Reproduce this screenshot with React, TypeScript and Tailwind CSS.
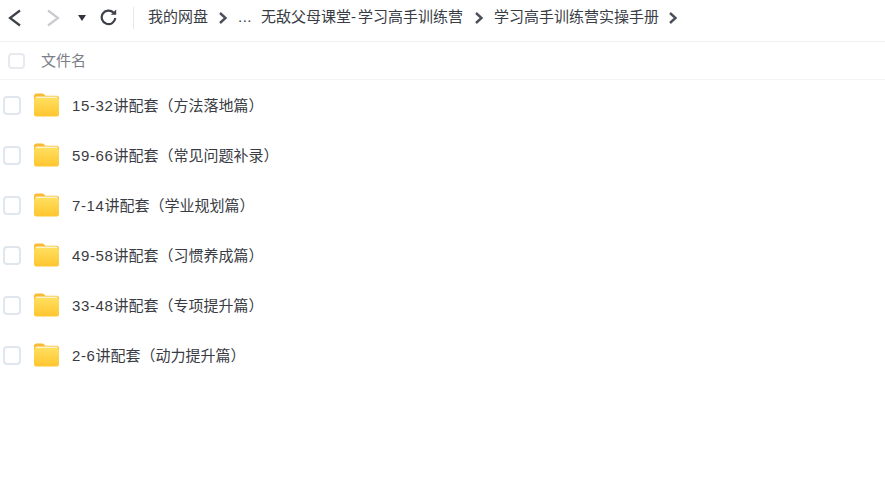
const rows = [
  ["15-32", "讲配套（方法落地篇）"],
  ["59-66", "讲配套（常见问题补录）"],
  ["7-14", "讲配套（学业规划篇）"],
  ["49-58", "讲配套（习惯养成篇）"],
  ["33-48", "讲配套（专项提升篇）"],
  ["2-6", "讲配套（动力提升篇）"],
];

function Sep() {
  return (
    <svg width="10" height="12" viewBox="0 0 10 12" fill="none" stroke="#4b4f5c" strokeWidth="2.4">
      <path d="M2 1l5.5 5L2 11" />
    </svg>
  );
}

function Folder() {
  return (
    <svg width="26" height="24" viewBox="0 0 26 24">
      <defs>
        <linearGradient id="folderBody" x1="0" y1="0" x2="0" y2="1">
          <stop offset="0" stopColor="#ffdf5f" />
          <stop offset="1" stopColor="#ffc52e" />
        </linearGradient>
      </defs>
      <path d="M1 3a2.5 2.5 0 0 1 2.5-2.5h5.5c1 0 1.6.4 2.2 1l1.3 1.2h11A2.5 2.5 0 0 1 26 5.2V10H1z" fill="#f9bb33" />
      <rect x="2.5" y="3.5" width="22" height="5" rx="1" fill="#fff3c9" />
      <rect x="1" y="5" width="25" height="18.5" rx="2.5" fill="url(#folderBody)" />
    </svg>
  );
}

export default function App() {
  return (
    <div className="w-[885px] h-[504px] bg-white overflow-hidden font-['Liberation_Sans','Noto_Sans_CJK_SC',sans-serif]">
      {/* top bar */}
      <div className="h-[42px] pb-[6px] flex items-center border-b border-[#f0f0f2] text-[15px] text-[#3a3c44]">
        <svg className="ml-[7px]" width="15" height="18" viewBox="0 0 15 18" fill="none" stroke="#3d4049" strokeWidth="2.2">
          <path d="M13 1.5L3 9l10 7.5" />
        </svg>
        <svg className="ml-[24px]" width="15" height="18" viewBox="0 0 15 18" fill="none" stroke="#c9cbd0" strokeWidth="2.2">
          <path d="M2 1.5L12 9 2 16.5" />
        </svg>
        <div className="ml-[17px] w-0 h-0 border-x-[4px] border-x-transparent border-t-[6px] border-t-[#33353d]" />
        <svg className="ml-[14px]" width="17" height="17" viewBox="0 0 17 17" fill="none" stroke="#3d4049" strokeWidth="2.2">
          <path d="M13.4 3.6A6.8 6.8 0 1 0 15.3 9" />
          <path d="M10.8 5.8h5.4V0.6z" fill="#3d4049" stroke="none" />
        </svg>
        <div className="ml-[16px] w-px h-[22px] bg-[#e8e8ea]" />
        <span className="ml-[14px]">我的网盘</span>
        <div className="ml-[10px]"><Sep /></div>
        <span className="ml-[10px] tracking-[0.5px]">...</span>
        <span className="ml-[9px]">
          无敌父母课堂<span className="tracking-[2px]">-</span>学习高手训练营
        </span>
        <div className="ml-[11px]"><Sep /></div>
        <span className="ml-[10px]">学习高手训练营实操手册</span>
        <div className="ml-[9px]"><Sep /></div>
      </div>

      {/* header */}
      <div className="h-[38px] flex items-center border-b border-[#f4f4f6]">
        <div className="ml-[8px] w-[17px] h-[16px] rounded-[4px] border-2 border-[#e8e9ee]" />
        <span className="ml-[16px] pt-[2px] text-[15px] text-[#7b7e88]">文件名</span>
      </div>

      {/* rows */}
      <div>
        {rows.map(([num, name]) => (
          <div key={num} className="h-[50px] flex items-center">
            <div className="ml-[3px] w-[18px] h-[19px] rounded-[4px] border-2 border-[#e0e6ee]" />
            <div className="ml-[12px]"><Folder /></div>
            <span className="ml-[13px] pt-[2px] text-[15px] text-[#3a3c44]">
              <span className="tracking-[0.6px]">{num}</span>
              {name}
            </span>
          </div>
        ))}
      </div>
    </div>
  );
}
